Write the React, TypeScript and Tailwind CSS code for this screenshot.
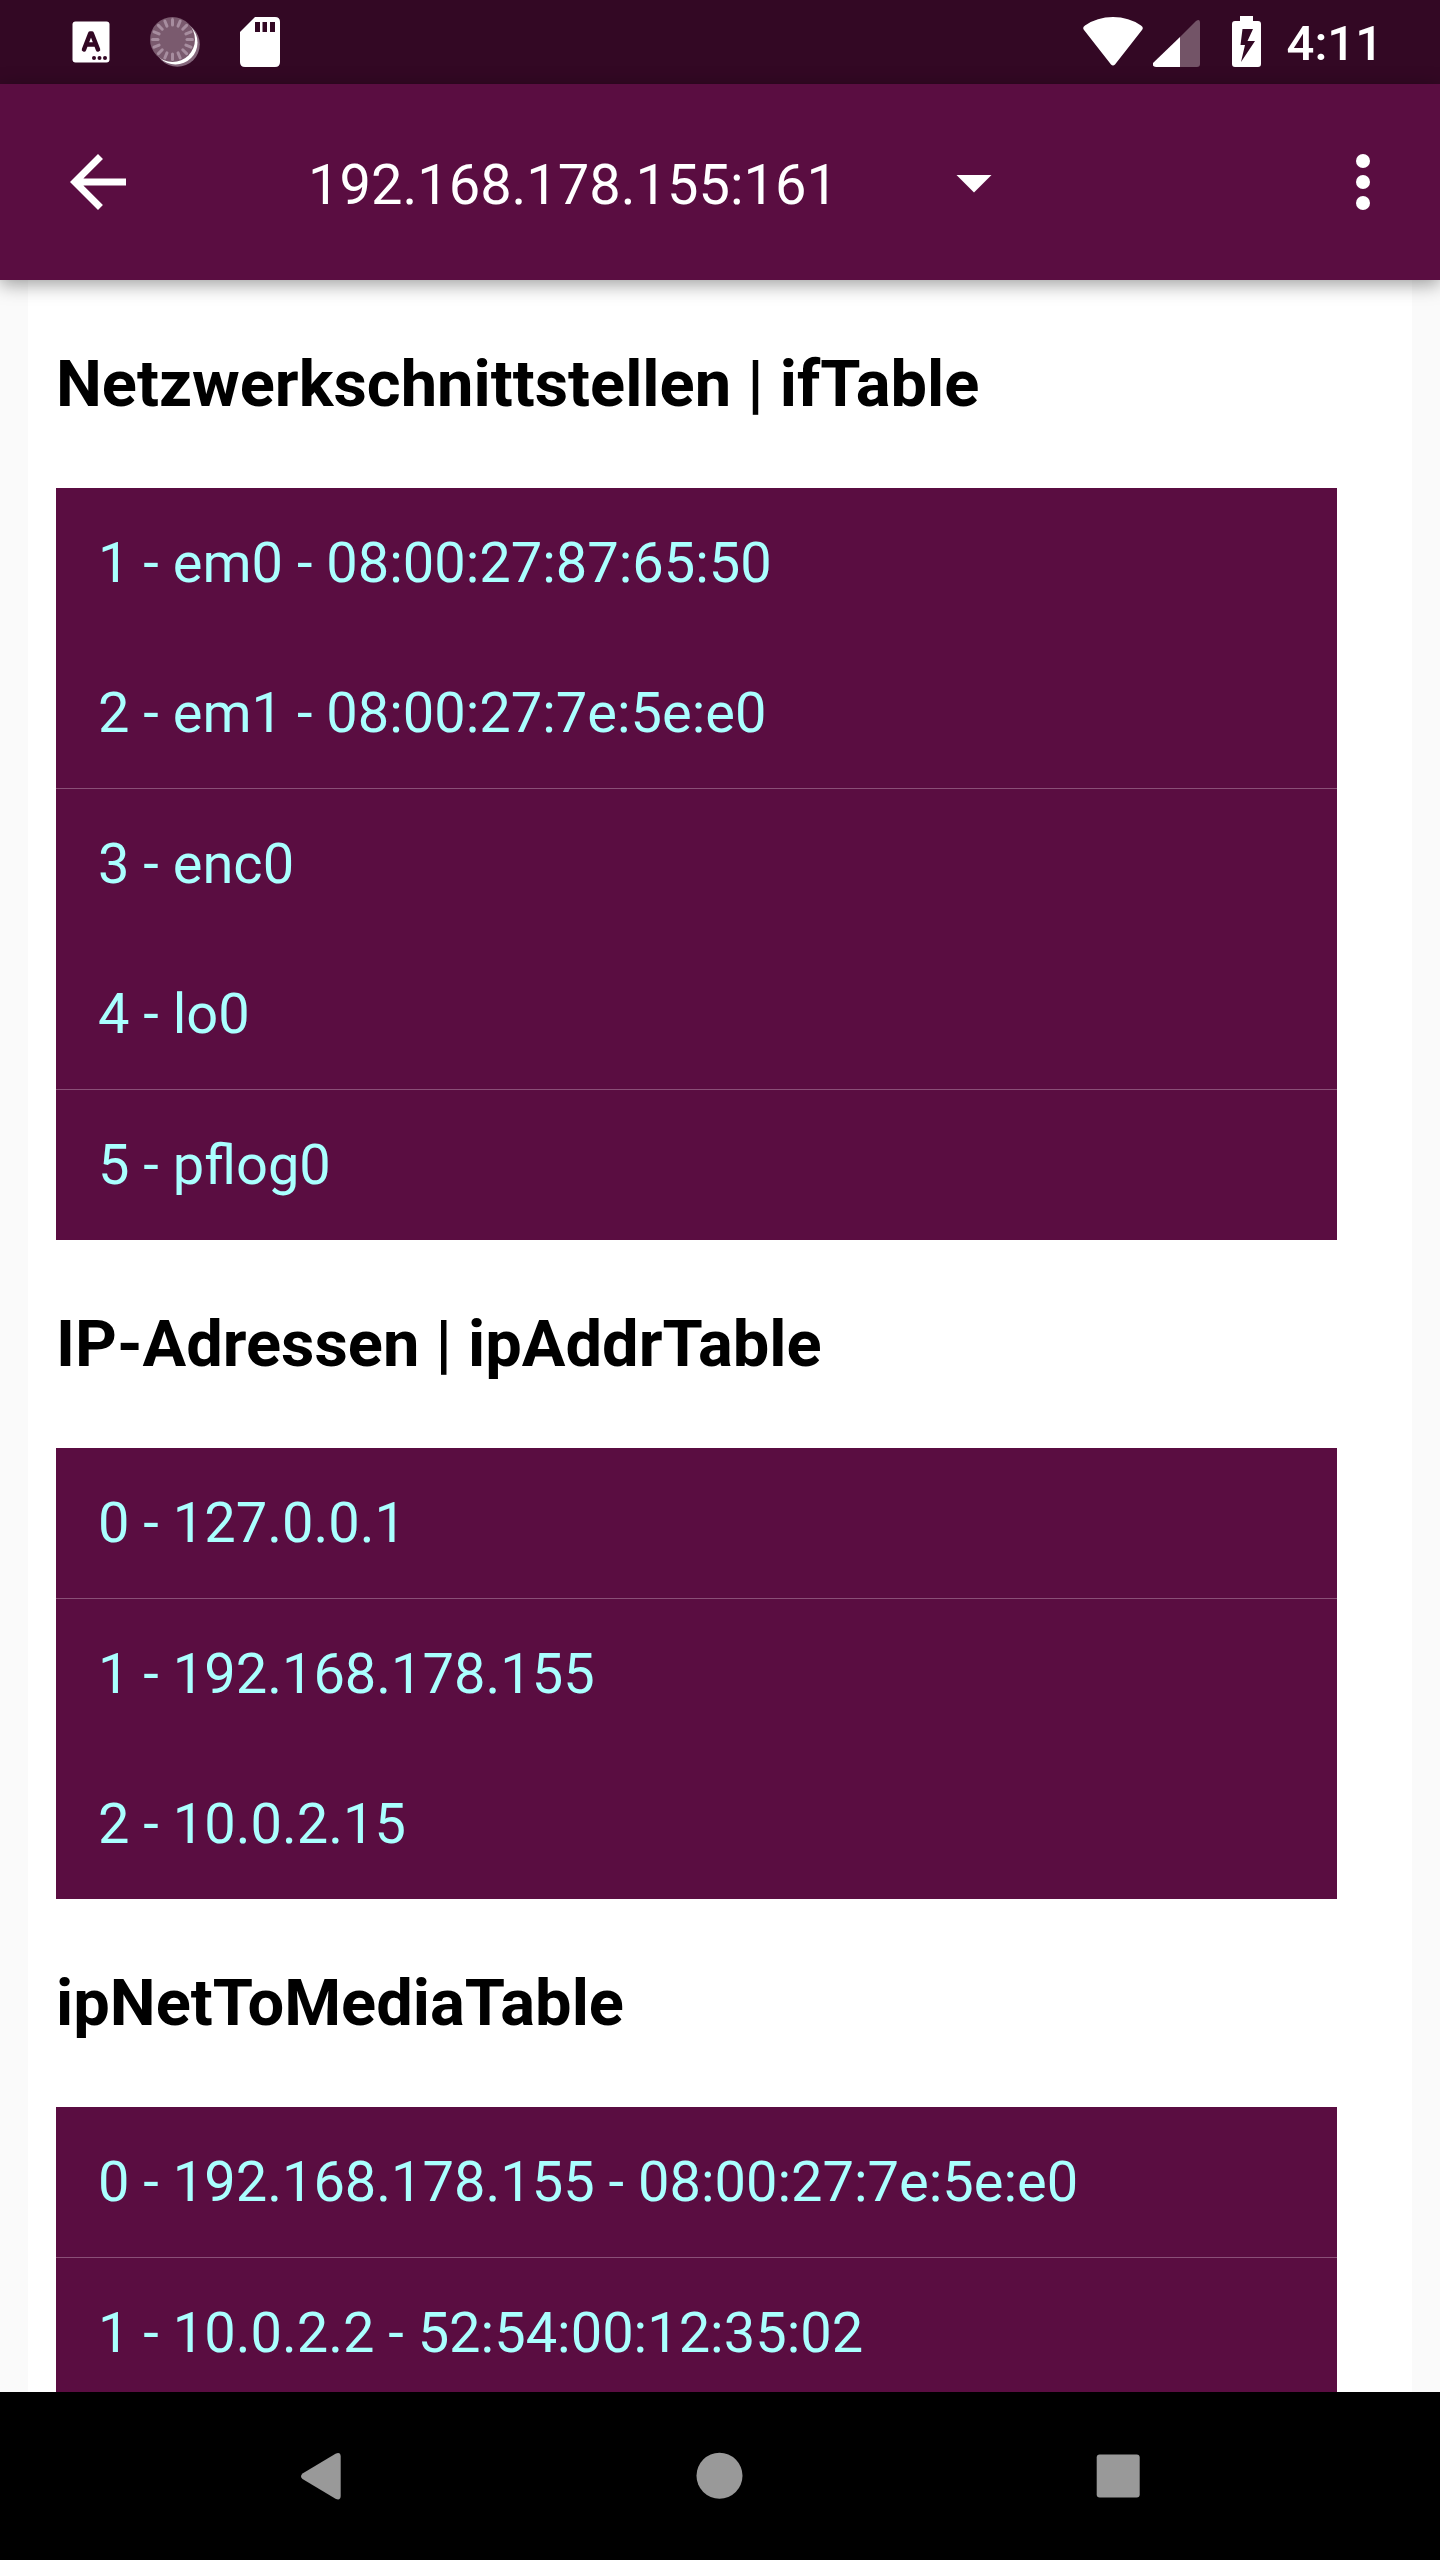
import React from "react";

type Section = { title: string; rows: { label: string; divided?: boolean }[] };

const sections: Section[] = [
  {
    title: "Netzwerkschnittstellen | ifTable",
    rows: [
      { label: "1 - em0 - 08:00:27:87:65:50" },
      { label: "2 - em1 - 08:00:27:7e:5e:e0", divided: true },
      { label: "3 - enc0" },
      { label: "4 - lo0", divided: true },
      { label: "5 - pflog0" },
    ],
  },
  {
    title: "IP-Adressen | ipAddrTable",
    rows: [
      { label: "0 - 127.0.0.1", divided: true },
      { label: "1 - 192.168.178.155" },
      { label: "2 - 10.0.2.15" },
    ],
  },
  {
    title: "ipNetToMediaTable",
    rows: [
      { label: "0 - 192.168.178.155 - 08:00:27:7e:5e:e0", divided: true },
      { label: "1 - 10.0.2.2 - 52:54:00:12:35:02" },
    ],
  },
];

const ticks = Array.from({ length: 16 }, (_, i) => i * 22.5);

function StatusBar() {
  return (
    <div className="flex h-[84px] shrink-0 items-center justify-between bg-[#330824] pr-[57px] pl-[72px] text-white">
      <div className="flex items-center gap-10">
        <svg className="h-[50px] w-[38px]" viewBox="0 0 38 50" aria-hidden="true">
          <rect x="0.5" y="4.5" width="37" height="41" rx="3" fill="#fff" />
          <path d="M12 32.500L18.200 16.500H19.800L26 32.500M14.500 27.500H23.500" fill="none" stroke="#330824" strokeWidth="4.500" strokeLinecap="round" strokeLinejoin="round" />
          <circle cx="22" cy="41" r="2" fill="#330824" />
          <circle cx="27.500" cy="41" r="2" fill="#330824" />
          <circle cx="33" cy="41" r="2" fill="#330824" />
        </svg>
        <svg className="h-[50px] w-[50px]" viewBox="0 0 50 50" aria-hidden="true">
          <circle cx="27.300" cy="27.300" r="22.500" fill="#85677c" />
          <circle cx="25.500" cy="25.500" r="22" fill="#fff" />
          <circle cx="22.500" cy="22.500" r="22.500" fill="#7a5a6e" />
          {ticks.map((a) => (
            <path key={a} d="M22.500 2.500V8" transform={`rotate(${a} 22.5 22.5)`} stroke="#a78d9f" strokeWidth="3" strokeLinecap="round" />
          ))}
        </svg>
        <svg className="h-[50px] w-[40px]" viewBox="0 0 40 50" aria-hidden="true">
          <path d="M15 0H35Q40 0 40 5V45Q40 50 35 50H5Q0 50 0 45V15Z" fill="#fff" />
          <path d="M15 5H20V15H15ZM22.500 5H27V15H22.500ZM30 5H35V15H30Z" fill="#330824" />
        </svg>
      </div>
      <div className="flex items-center">
        <svg className="h-[50px] w-[60px]" viewBox="0 0 60 50" aria-hidden="true">
          <path d="M1 13Q-1 10.500 2 8.500Q14 0 30 0Q46 0 58 8.500Q61 10.500 59 13L32 47.500Q30 49.500 28 47.500Z" fill="#fff" />
        </svg>
        <svg className="ml-[10px] h-[50px] w-[47px]" viewBox="0 0 47 50" aria-hidden="true">
          <path d="M43 4Q47 1 47 6V47Q47 50 44 50H27V20Z" fill="#735467" />
          <path d="M27 20V50H3Q-1 50 0 46Z" fill="#fff" />
        </svg>
        <svg className="ml-8 h-[52px] w-[29px]" viewBox="0 0 29 52" aria-hidden="true">
          <path fillRule="evenodd" d="M8 0H21V5H26Q29 5 29 8V48Q29 51 26 51H3Q0 51 0 48V8Q0 5 3 5H8ZM10.500 13L8.500 29H13L9 46L23 25H15.500L21 13Z" fill="#fff" />
        </svg>
        <span className="ml-[26px] pt-1 text-[49px] leading-[56px] font-medium">4:11</span>
      </div>
    </div>
  );
}

function AppBar() {
  return (
    <header className="z-10 flex h-[196px] shrink-0 items-center bg-[#5a0d41] pr-[35px] pl-14 text-white shadow-[0_4px_18px_rgba(0,0,0,0.4)]">
      <button type="button" aria-label="Zurück">
        <svg className="size-[84px]" viewBox="0 0 24 24" fill="currentColor" aria-hidden="true">
          <path d="M20 11H7.830l5.590-5.590L12 4l-8 8 8 8 1.410-1.410L7.830 13H20v-2z" />
        </svg>
      </button>
      <div className="relative ml-[168px] w-[708px]">
        <select aria-label="Host" defaultValue="host" className="block h-[84px] w-full appearance-none bg-transparent pt-1.5 text-[56px] leading-[78px] text-white">
          <option value="host">192.168.178.155:161</option>
        </select>
        <svg className="pointer-events-none absolute top-0 right-0 size-[84px]" viewBox="0 0 24 24" fill="currentColor" aria-hidden="true">
          <path d="M7 10l5 5 5-5z" />
        </svg>
      </div>
      <button type="button" aria-label="Weitere Optionen" className="ml-auto">
        <svg className="size-[84px]" viewBox="0 0 24 24" fill="currentColor" aria-hidden="true">
          <circle cx="12" cy="6" r="2" />
          <circle cx="12" cy="12" r="2" />
          <circle cx="12" cy="18" r="2" />
        </svg>
      </button>
    </header>
  );
}

function NavBar() {
  return (
    <nav className="flex h-[168px] shrink-0 items-center justify-center gap-[314px] bg-black text-[#999999]">
      <button type="button" aria-label="Zurück">
        <svg className="size-[84px]" viewBox="0 0 84 84" fill="currentColor" aria-hidden="true">
          <path d="M22.500 39.500L55.500 19.700Q60.500 17.500 60.700 22.500V62Q60.500 67 55.500 64.800L22.500 45Q19.500 42.300 22.500 39.500Z" />
        </svg>
      </button>
      <button type="button" aria-label="Startseite">
        <svg className="size-[84px]" viewBox="0 0 84 84" fill="currentColor" aria-hidden="true">
          <circle cx="41.500" cy="41.700" r="23" />
        </svg>
      </button>
      <button type="button" aria-label="Übersicht">
        <svg className="size-[84px]" viewBox="0 0 84 84" fill="currentColor" aria-hidden="true">
          <rect x="20.700" y="20.500" width="43" height="43" rx="3" />
        </svg>
      </button>
    </nav>
  );
}

export default function App() {
  return (
    <div className="flex h-screen flex-col overflow-hidden bg-[#fafafa] font-[Roboto,sans-serif]">
      <StatusBar />
      <AppBar />
      <main className="mx-7 min-h-0 flex-1 overflow-hidden bg-white pr-[75px] pl-7">
        {sections.map((section) => (
          <section key={section.title}>
            <h2 className="flex h-[208px] items-center text-[65px] leading-[78px] font-bold text-black">{section.title}</h2>
            <ul className="bg-[#5a0d41]">
              {section.rows.map((row) => (
                <li key={row.label} className={row.divided ? "border-b border-[#8a4f77]" : ""}>
                  <a href="#" className="flex h-[150px] items-center px-[42px] text-[56px] leading-[66px] text-[#aaffff]">
                    {row.label}
                  </a>
                </li>
              ))}
            </ul>
          </section>
        ))}
      </main>
      <NavBar />
    </div>
  );
}
